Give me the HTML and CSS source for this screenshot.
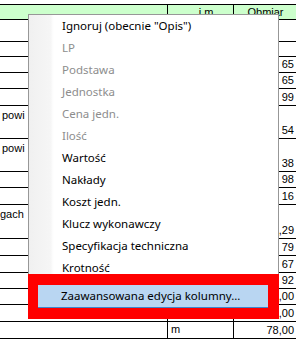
FILE: index.html
```html
<!DOCTYPE html>
<html lang="pl">
<head>
  <meta charset="UTF-8" />
  <meta name="viewport" content="width=device-width, initial-scale=1.0"/>
  <title>Kosztorys - wybór kolumny</title>
  <link rel="stylesheet" href="styles.css">
</head>
<body>

  <div class="sheet">
    <div class="row head">
      <div class="cell"></div>
      <div class="cell">j.m.</div>
      <div class="cell">Obmiar</div>
    </div>
    <div class="row h22"><div class="cell"></div><div class="cell"></div><div class="cell"></div></div>
    <div class="row h15"><div class="cell"></div><div class="cell"></div><div class="cell"></div></div>
    <div class="row h16"><div class="cell"></div><div class="cell"></div><div class="cell num">65</div></div>
    <div class="row h16"><div class="cell"></div><div class="cell"></div><div class="cell num">65</div></div>
    <div class="row h17"><div class="cell"></div><div class="cell"></div><div class="cell num">99</div></div>
    <div class="row h33"><div class="cell txt">powi</div><div class="cell"></div><div class="cell num">54</div></div>
    <div class="row h33"><div class="cell txt">powi</div><div class="cell"></div><div class="cell num">38</div></div>
    <div class="row h16"><div class="cell"></div><div class="cell"></div><div class="cell num">98</div></div>
    <div class="row h17"><div class="cell"></div><div class="cell"></div><div class="cell num">16</div></div>
    <div class="row h34"><div class="cell txt tight">gach</div><div class="cell"></div><div class="cell num">,29</div></div>
    <div class="row h17"><div class="cell"></div><div class="cell"></div><div class="cell num">79</div></div>
    <div class="row h17"><div class="cell"></div><div class="cell"></div><div class="cell num">67</div></div>
    <div class="row h16"><div class="cell"></div><div class="cell"></div><div class="cell num">92</div></div>
    <div class="row h16"><div class="cell"></div><div class="cell"></div><div class="cell num">,00</div></div>
    <div class="row h17"><div class="cell"></div><div class="cell"></div><div class="cell num">,00</div></div>
    <div class="row h17"><div class="cell"></div><div class="cell">m</div><div class="cell num">78,00</div></div>
  </div>

  <!-- Menu kontekstowe nagłówka kolumny -->
  <div class="menu">
    <div class="item">Ignoruj (obecnie "Opis")</div>
    <div class="item off">LP</div>
    <div class="item off">Podstawa</div>
    <div class="item off">Jednostka</div>
    <div class="item off">Cena jedn.</div>
    <div class="item off">Ilość</div>
    <div class="item">Wartość</div>
    <div class="item">Nakłady</div>
    <div class="item">Koszt jedn.</div>
    <div class="item">Klucz wykonawczy</div>
    <div class="item">Specyfikacja techniczna</div>
    <div class="item">Krotność</div>
    <div class="mark">
      <div class="item sel">Zaawansowana edycja kolumny...</div>
    </div>
  </div>

</body>
</html>
```

FILE: styles.css
```css
body {
  margin: 0;
  background: #fff;
  overflow: hidden;
  position: relative;
  height: 339px;
  font-family: 'Liberation Sans', Arial, sans-serif;
  font-size: 11px;
  color: #000;
}
.sheet {
  margin: 4px 0 0 -1px;
  width: 298px;
  border-top: 1px solid #000;
}
.row {
  display: grid;
  grid-template-columns: 169px 66px 63px;
  border-bottom: 1px solid #000;
  box-sizing: border-box;
}
.row.head { height: 15px; background: #ccffcc; }
.h15 { height: 15px; }
.h16 { height: 16px; }
.h17 { height: 17px; }
.h22 { height: 22px; }
.h33 { height: 33px; }
.h34 { height: 34px; }
.cell {
  border-right: 1px solid #000;
  padding: 0 2px 0 3px;
  line-height: 15px;
  overflow: hidden;
  white-space: nowrap;
}
.txt {
  padding-top: 2px;
}
.cell.tight {
  padding-left: 1px;
}
.head .cell {
  text-align: center;
  line-height: 14px;
}
.head .cell:nth-child(2) {
  padding-left: 16px;
}
.num {
  text-align: right;
  align-self: end;
}

.menu {
  position: absolute;
  left: 28px;
  top: 14px;
  width: 251px;
  box-sizing: border-box;
  border: 1px solid #979797;
  border-bottom: none;
  background: linear-gradient(to right, #f0f0f0 0, #f6f6f6 22px, #fbfbfb 23px, #fff 25px, #fff 100%);
  font-family: 'Noto Sans', 'Segoe UI', sans-serif;
  font-size: 11.5px;
}
.item {
  height: 22px;
  line-height: 22px;
  padding-left: 33px;
  color: #000;
  white-space: nowrap;
}
.item.off {
  color: #8d8d8d;
}
.mark {
  position: relative;
  margin: -5px -1px 0;
  border: 11px solid #ff0000;
  border-left-width: 10px;
}
.item.sel {
  background: #b9d6f2;
  border-bottom: 1px solid #3d86cc;
  padding-left: 23px;
}
```
